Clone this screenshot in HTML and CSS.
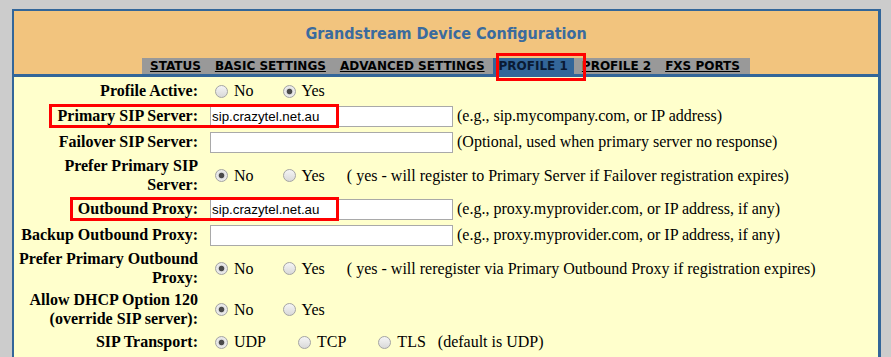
FILE: index.html
```html
<!DOCTYPE html>
<html>
<head>
<meta charset="utf-8">
<title>Grandstream Device Configuration</title>
<link rel="stylesheet" href="styles.css">
</head>
<body>
<div class="page">
  <div class="frame">
    <div class="head">
      <div class="title">Grandstream Device Configuration</div>
      <nav class="tabs">
        <a class="tab" href="#">STATUS</a>
        <a class="tab" href="#">BASIC SETTINGS</a>
        <a class="tab" href="#">ADVANCED SETTINGS</a>
        <a class="tab on" href="#">PROFILE 1</a>
        <a class="tab" href="#">PROFILE 2</a>
        <a class="tab" href="#">FXS PORTS</a>
      </nav>
    </div>
    <div class="form">
      <div class="row s">
        <div class="lbl">Profile Active:</div>
        <div class="val">
          <label class="opt"><input type="radio" name="pa"> No</label>
          <label class="opt"><input type="radio" name="pa" checked> Yes</label>
        </div>
      </div>
      <div class="row i">
        <div class="lbl">Primary SIP Server:</div>
        <div class="val"><input class="txt" type="text" value="sip.crazytel.net.au"><span class="hint">(e.g., sip.mycompany.com, or IP address)</span></div>
      </div>
      <div class="row i">
        <div class="lbl">Failover SIP Server:</div>
        <div class="val"><input class="txt" type="text" value=""><span class="hint">(Optional, used when primary server no response)</span></div>
      </div>
      <div class="row d">
        <div class="lbl">Prefer Primary SIP<br>Server:</div>
        <div class="val">
          <label class="opt"><input type="radio" name="pp" checked> No</label>
          <label class="opt"><input type="radio" name="pp"> Yes</label>
          <span class="note">( yes - will register to Primary Server if Failover registration expires)</span>
        </div>
      </div>
      <div class="row i">
        <div class="lbl">Outbound Proxy:</div>
        <div class="val"><input class="txt" type="text" value="sip.crazytel.net.au"><span class="hint">(e.g., proxy.myprovider.com, or IP address, if any)</span></div>
      </div>
      <div class="row i">
        <div class="lbl">Backup Outbound Proxy:</div>
        <div class="val"><input class="txt" type="text" value=""><span class="hint">(e.g., proxy.myprovider.com, or IP address, if any)</span></div>
      </div>
      <div class="row d">
        <div class="lbl">Prefer Primary Outbound<br>Proxy:</div>
        <div class="val">
          <label class="opt"><input type="radio" name="po" checked> No</label>
          <label class="opt"><input type="radio" name="po"> Yes</label>
          <span class="note">( yes - will reregister via Primary Outbound Proxy if registration expires)</span>
        </div>
      </div>
      <div class="row d">
        <div class="lbl">Allow DHCP Option 120<br>(override SIP server):</div>
        <div class="val">
          <label class="opt"><input type="radio" name="dh" checked> No</label>
          <label class="opt"><input type="radio" name="dh"> Yes</label>
        </div>
      </div>
      <div class="row s">
        <div class="lbl">SIP Transport:</div>
        <div class="val">
          <label class="opt t"><input type="radio" name="tr" checked> UDP</label>
          <label class="opt t"><input type="radio" name="tr"> TCP</label>
          <label class="opt t last"><input type="radio" name="tr"> TLS</label>
          <span>(default is UDP)</span>
        </div>
      </div>
    </div>
  </div>
  <div class="mark m1"></div>
  <div class="mark m2"></div>
  <div class="mark m3"></div>
</div>
</body>
</html>
```
FILE: styles.css
```css
html, body {
  margin: 0;
  padding: 0;
  background: #cccccc;
  font-family: "Liberation Serif", "Times New Roman", serif;
  font-size: 16px;
  color: #000;
}

.page {
  position: relative;
  height: 357px;
  overflow: hidden;
}

.frame {
  margin: 9px 0 0 12px;
  width: 869px;
  box-sizing: border-box;
  border: 2px solid #336699;
  border-right-width: 3px;
  border-bottom: 0;
  background: #ffffcc;
  padding-bottom: 40px;
}

.head {
  height: 63px;
  background: #f2c47e;
  border-bottom: 3px solid #336699;
  display: flex;
  flex-direction: column;
  align-items: center;
}

.title {
  margin-top: 12px;
  font-family: "DejaVu Sans", Verdana, sans-serif;
  font-stretch: condensed;
  font-weight: bold;
  font-size: 16px;
  line-height: 22px;
  color: #3a6b9e;
}

.tabs {
  margin-top: auto;
  display: flex;
  background: #999999;
  height: 16px;
  padding: 0 2px;
}

.tab {
  font-family: "DejaVu Sans", Verdana, sans-serif;
  font-weight: bold;
  font-size: 12px;
  line-height: 16px;
  color: #000;
  text-decoration: underline;
  padding: 0 6px;
  margin-right: 2px;
}

.tab.on {
  background: #336699;
  text-decoration: none;
  color: #0a1a33;
}

.form {
  padding-top: 2px;
}

.row {
  display: grid;
  grid-template-columns: 184px 1fr;
  column-gap: 12px;
  align-items: center;
}

.row.s { height: 24px; }
.row.i { height: 26px; }
.row.d { height: 41px; }

.lbl {
  font-weight: bold;
  text-align: right;
  line-height: 18.4px;
  white-space: nowrap;
}

.val {
  display: flex;
  align-items: center;
  white-space: nowrap;
}

.opt {
  display: inline-flex;
  align-items: center;
  margin-right: 24px;
}

.opt.t { margin-right: 27px; }
.opt.t.last { margin-right: 12px; }

.note { margin-left: -2px; }

input[type="radio"] {
  -webkit-appearance: none;
  appearance: none;
  width: 13px;
  height: 13px;
  margin: 0 6px 0 5px;
  border-radius: 50%;
  border: 1px solid #a4a4a4;
  background: linear-gradient(#f5f5f5, #d9d9d9);
  box-sizing: border-box;
}

input[type="radio"]:checked {
  background: radial-gradient(circle at center, #4a4a4a 0, #4a4a4a 2.3px, #dcdcdc 3.2px, #ececec 4.5px, #d6d6d6 100%);
}

.txt {
  width: 243px;
  height: 21px;
  box-sizing: border-box;
  margin: 0;
  border: 1px solid #a9a9a9;
  padding: 0 1px;
  background: #fff;
  font-family: "Liberation Sans", Arial, sans-serif;
  font-size: 13.33px;
  color: #000;
}

.hint {
  margin-left: 4px;
}

.mark {
  position: absolute;
  border: 3px solid #ff0000;
  box-sizing: border-box;
}

.m1 { left: 49px; top: 104px; width: 290px; height: 24px; }
.m2 { left: 70px; top: 197px; width: 269px; height: 24px; }
.m3 { left: 496px; top: 53px; width: 90px; height: 28px; }
```
